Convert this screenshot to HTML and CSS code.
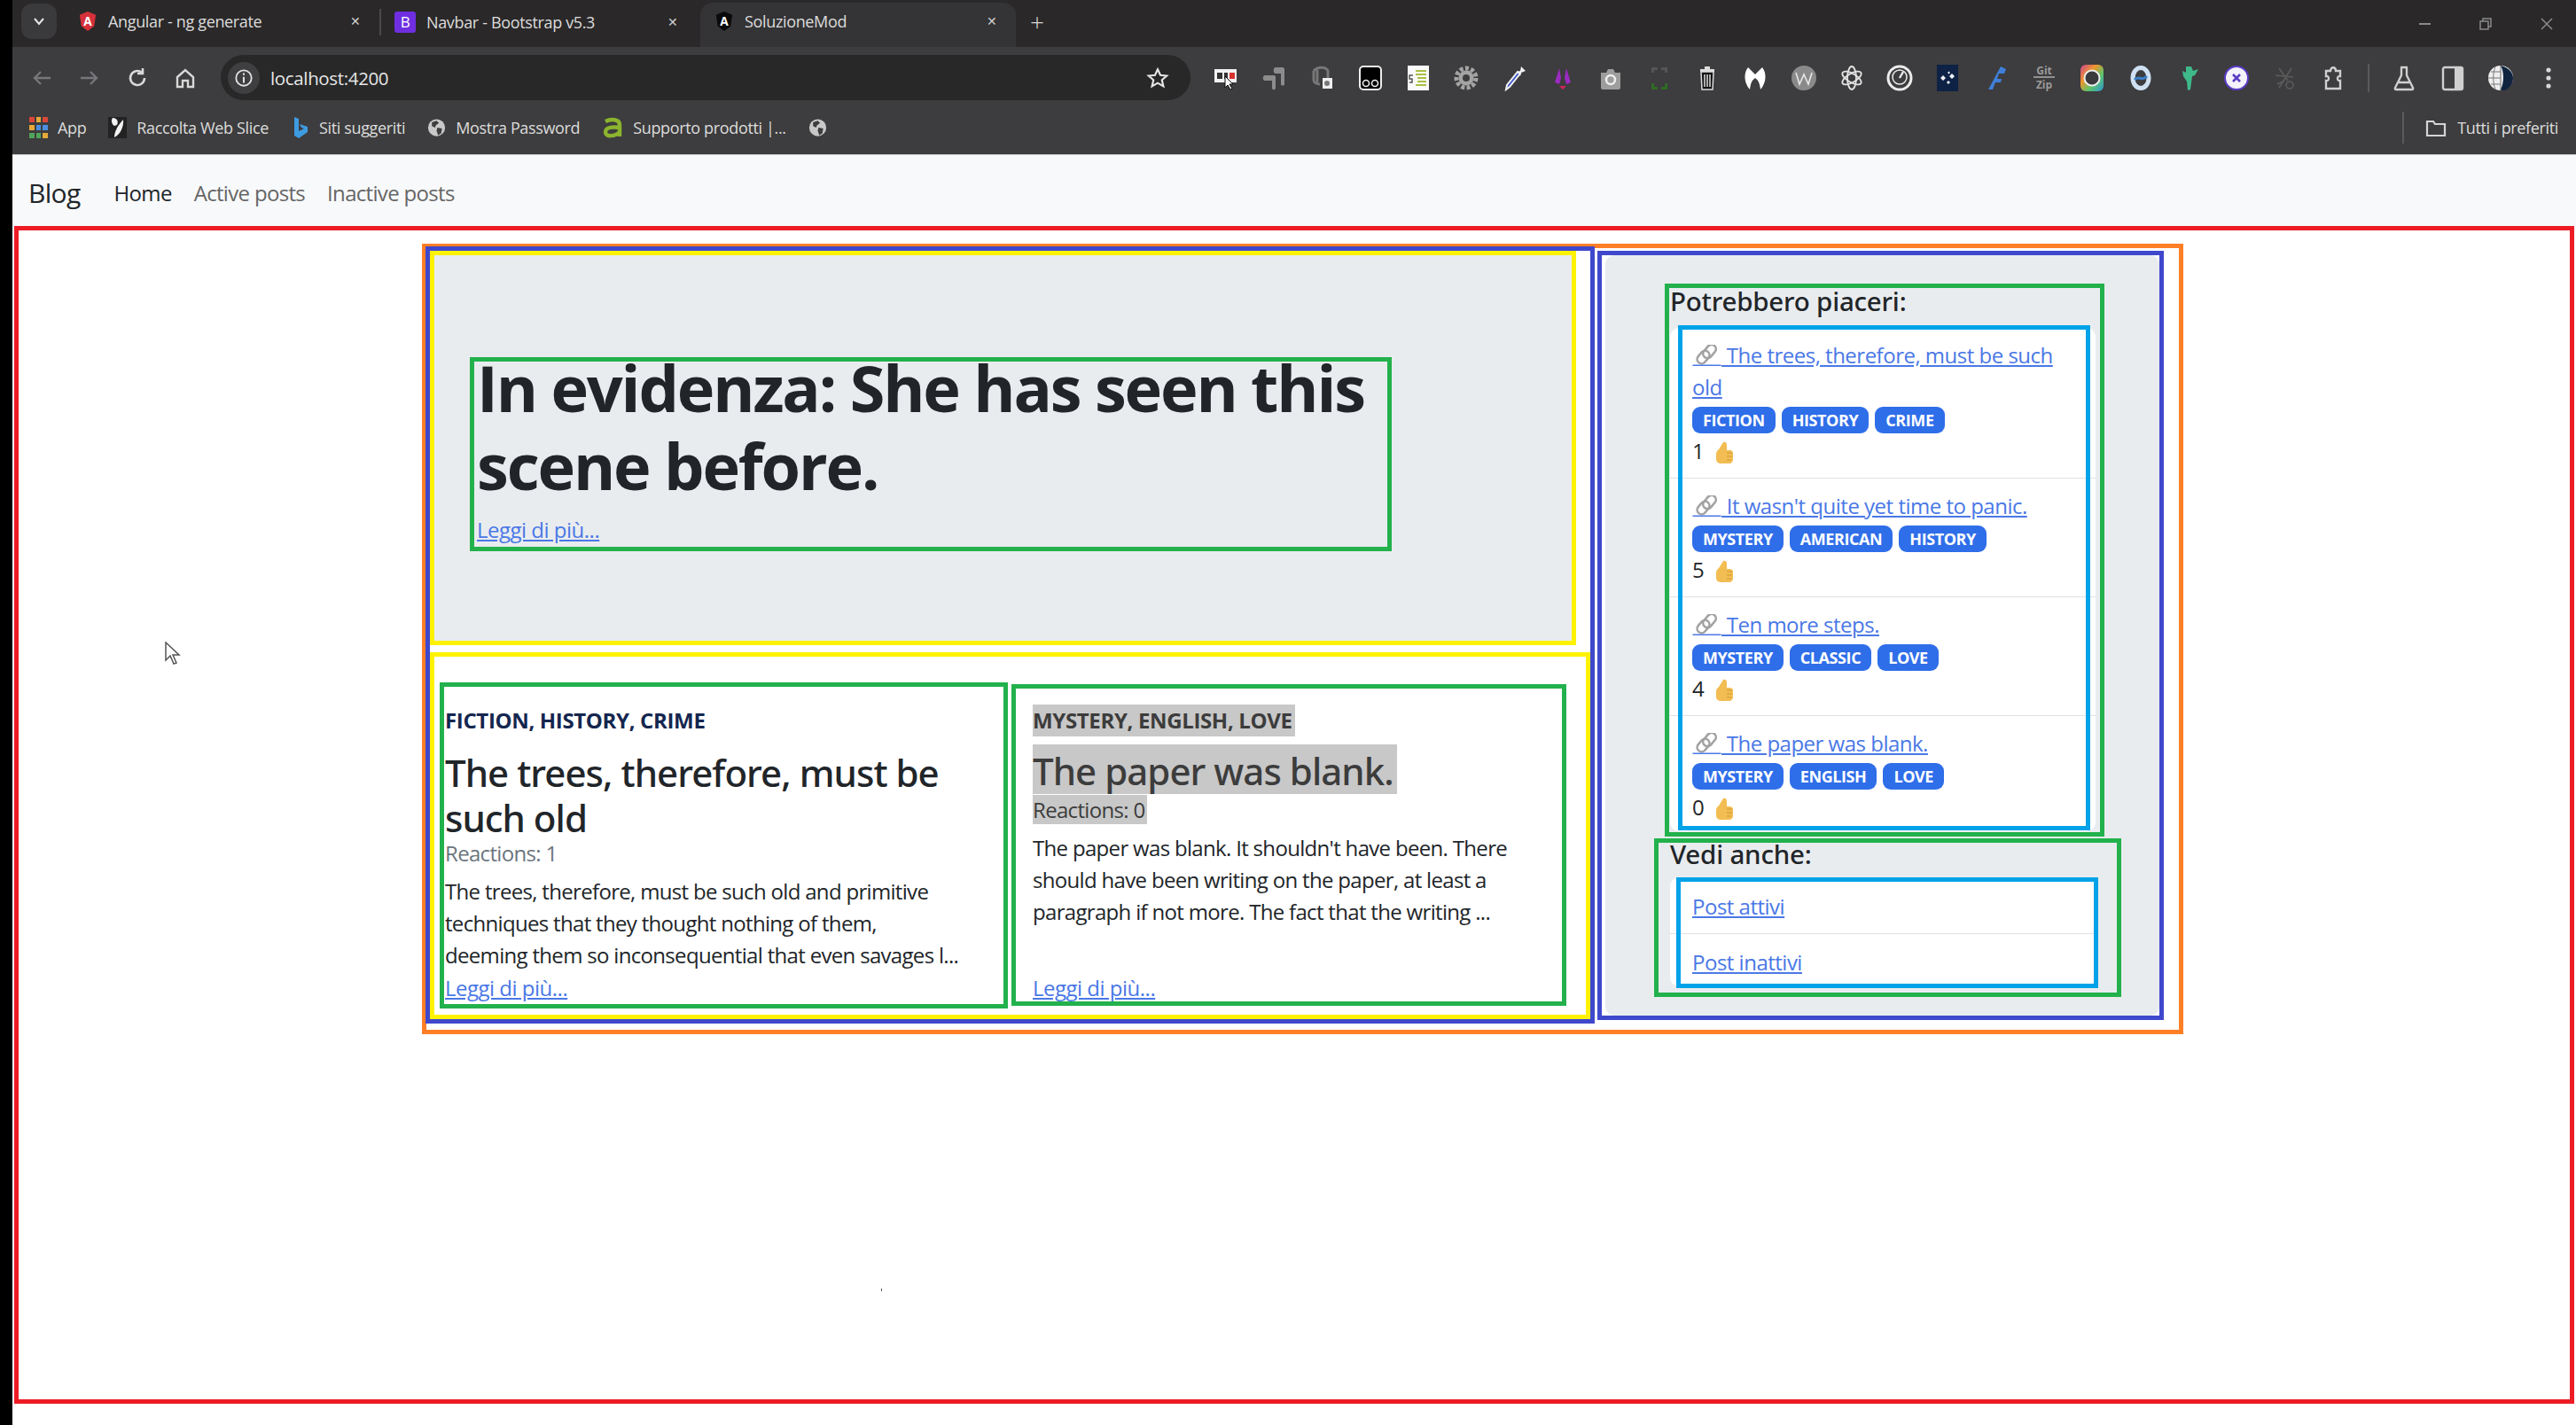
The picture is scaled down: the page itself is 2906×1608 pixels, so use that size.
FILE: index.html
```html
<!DOCTYPE html>
<html lang="it">
<head>
    <meta charset="UTF-8">
    <title>SoluzioneMod</title>
    <link rel="stylesheet" href="styles.css">
</head>
<body>
    <!-- simboli riusati nelle liste -->
    <svg class="sprite" aria-hidden="true">
        <symbol id="chain" viewBox="0 0 32 24">
            <g fill="none" stroke="#a2a2a2" stroke-width="2.6">
                <rect x="14" y="-1" width="10" height="17" rx="5" transform="rotate(40 19 7.500)"/>
                <rect x="7" y="6" width="10" height="16" rx="5" transform="rotate(40 12 14)"/>
            </g>
            <rect x="0" y="22.500" width="32" height="1.500" fill="#4a78e6"/>
        </symbol>
        <symbol id="thumb" viewBox="0 0 22 25">
            <path fill="#f2bd52" d="M10 1c2-1 4 0 4 3v6h3c2 0 4 1 4 3v8c0 2-2 4-4 4H8c-4 0-6-2-6-5v-6c0-2 1-3 3-5z"/>
            <path fill="none" stroke="#d09a35" stroke-width="1.200" d="M14 13h6M14 17h6M14 21h5"/>
        </symbol>
    </svg>

    <header class="browser">
        <div class="tabstrip">
            <div class="tab-search">
                <svg viewBox="0 0 16 16" width="16" height="16"><path d="M3 5l5 6 5-6" fill="none" stroke="#e6e6e6" stroke-width="2"/></svg>
            </div>
            <div class="tab">
                <svg class="favicon" viewBox="0 0 22 24"><path fill="#d6303a" d="M11 0l10 4-2 14-8 6-8-6L1 4z"/><text x="11" y="17" class="fav-letter">A</text></svg>
                <span class="tab-title">Angular - ng generate</span>
                <span class="tab-close">&#10005;</span>
            </div>
            <div class="tab tab-sep">
                <span class="fav-box">B</span>
                <span class="tab-title">Navbar - Bootstrap v5.3</span>
                <span class="tab-close">&#10005;</span>
            </div>
            <div class="tab tab-active">
                <svg class="favicon" viewBox="0 0 22 24"><path fill="#0a0a0a" d="M11 0l10 4-2 14-8 6-8-6L1 4z"/><text x="11" y="17" class="fav-letter">A</text></svg>
                <span class="tab-title">SoluzioneMod</span>
                <span class="tab-close">&#10005;</span>
            </div>
            <span class="tab-new">+</span>
            <div class="win-controls">
                <span class="win-min"></span>
                <svg viewBox="0 0 14 14" width="14" height="14"><path d="M1 4h9v9H1zM4 4V1h9v9h-3" fill="none" stroke="#8a8a8a" stroke-width="1.500"/></svg>
                <svg viewBox="0 0 14 14" width="14" height="14"><path d="M1 1l12 12M13 1L1 13" stroke="#8a8a8a" stroke-width="1.500"/></svg>
            </div>
        </div>

        <div class="toolbar">
            <svg class="tool" viewBox="0 0 30 30"><path d="M25 15H7M14 8l-7 7 7 7" fill="none" stroke="#77767a" stroke-width="2.400"/></svg>
            <svg class="tool" viewBox="0 0 30 30"><path d="M5 15h18M16 8l7 7-7 7" fill="none" stroke="#77767a" stroke-width="2.400"/></svg>
            <svg class="tool" viewBox="0 0 30 30"><path d="M23 15a8 8 0 1 1-3-6.200M21 4v6h-6" fill="none" stroke="#d8d8d8" stroke-width="2.600"/></svg>
            <svg class="tool" viewBox="0 0 30 30"><path d="M6 14l9-8 9 8v11h-6v-7h-6v7H6z" fill="none" stroke="#d8d8d8" stroke-width="2.400"/></svg>

            <div class="omnibox">
                <span class="site-info">
                    <svg viewBox="0 0 24 24" width="22" height="22"><circle cx="12" cy="12" r="9.500" fill="none" stroke="#e2e2e2" stroke-width="2"/><path d="M12 10.500V18M12 6v2.400" stroke="#e2e2e2" stroke-width="2.200"/></svg>
                </span>
                <span class="url">localhost:4200</span>
                <svg class="star" viewBox="0 0 24 24" width="26" height="26"><path d="M12 3l2.800 6 6.600.7-5 4.400 1.500 6.500L12 17.200 6.100 20.600l1.500-6.500-5-4.400 6.600-.7z" fill="none" stroke="#e6e6e6" stroke-width="2"/></svg>
            </div>

            <div class="extensions">
                <svg class="ext" viewBox="0 0 30 30"><rect x="2" y="5" width="25" height="15" fill="#f2f2f2"/><path d="M5 9h6v7H5zM13 9h4v7h-4z" fill="#333"/><path d="M19 9h6v7h-6z" fill="#d8322f"/><path d="M14 13l0 13 3-3 3 5 2-1-3-5h4z" fill="#fff" stroke="#111"/></svg>
                <svg class="ext" viewBox="0 0 30 30"><path d="M17 3h8c1 0 2 1 2 2v17c0 2-4 2-4 0V10h-6c-3 0-3-7 0-7zM5 12h10c2 0 2 1 2 2v12c0 3-4 3-4 0v-8H5c-3 0-3-6 0-6z" fill="#8c8c8c"/></svg>
                <svg class="ext" viewBox="0 0 30 30"><path d="M5 7c4-5 14-5 16 0v12M9 6v14M5 7v10c0 3 3 5 7 5" fill="none" stroke="#777" stroke-width="3"/><path d="M15 15h11v12H15z" fill="#eee"/><circle cx="20" cy="21" r="3" fill="#777"/></svg>
                <svg class="ext" viewBox="0 0 30 30"><rect x="3" y="2" width="24" height="26" rx="4" fill="#000" stroke="#eee" stroke-width="2"/><circle cx="10" cy="21" r="3.500" fill="none" stroke="#eee" stroke-width="1.600"/><circle cx="20" cy="21" r="3.500" fill="none" stroke="#eee" stroke-width="1.600"/></svg>
                <svg class="ext" viewBox="0 0 30 30"><rect x="3" y="1" width="24" height="28" fill="#fafafa"/><path d="M12 7h12M12 11h12M14 15h10M14 19h10M12 23h12" stroke="#a9bf45" stroke-width="2"/><path d="M9 12H5v4h3v4H5" fill="none" stroke="#555" stroke-width="1.500"/></svg>
                <svg class="ext" viewBox="0 0 30 30"><circle cx="15" cy="15" r="11" fill="none" stroke="#a4a4a4" stroke-width="5" stroke-dasharray="4 2.300"/><circle cx="15" cy="15" r="8.500" fill="#a4a4a4"/><circle cx="15" cy="15" r="4" fill="#3d3c3e"/></svg>
                <svg class="ext" viewBox="0 0 30 30"><path d="M21 10L9 25l-4 3 1-5L18 8z" fill="#3f59c9" stroke="#f1f1f1" stroke-width="2"/><path d="M17 8l4-1 1-5 5 5-5 2-1 4z" fill="#f1f1f1"/></svg>
                <svg class="ext" viewBox="0 0 30 30"><path d="M11 4L6 20l5 2 2-7zM19 4l5 16-5 2-2-7z" fill="#9a2bc0"/><path d="M11 24h8l-4 4z" fill="#d2245f"/></svg>
                <svg class="ext" viewBox="0 0 30 30"><path d="M4 9h6l2-4h6l2 4h6v17c0 1-1 2-2 2H6c-1 0-2-1-2-2z" fill="#9d9d9d"/><circle cx="15" cy="17" r="5" fill="none" stroke="#eee" stroke-width="2.500"/></svg>
                <svg class="ext" viewBox="0 0 30 30"><path d="M6 3h7v3H9v3H6zM17 3h7v6h-3V6h-4z" fill="#555"/><path d="M6 21h3v4h4v3H6zM21 21h3v7h-7v-3h4z" fill="#2f6b24"/></svg>
                <svg class="ext" viewBox="0 0 30 30"><path d="M8 8h14l-1 20H9z" fill="#111" stroke="#ddd" stroke-width="1.500"/><path d="M7 5h16v3H7zM12 2h6v3h-6z" fill="#ddd"/><path d="M12 11v14M15 11v14M18 11v14" stroke="#ddd" stroke-width="1.500"/></svg>
                <svg class="ext" viewBox="0 0 30 30"><path d="M7 3l8 8 8-8c5 6 5 17-2 25-1-7-2-10-6-13-4 3-5 6-6 13C2 20 2 9 7 3z" fill="#fff"/></svg>
                <svg class="ext" viewBox="0 0 30 30"><circle cx="15" cy="15" r="14" fill="#8a8a8a"/><path d="M6 9l4 13 5-11 5 11 4-13" fill="none" stroke="#e8e8e8" stroke-width="1.600"/></svg>
                <svg class="ext" viewBox="0 0 30 30"><g fill="none" stroke="#e4e4e4" stroke-width="1.800"><ellipse cx="15" cy="15" rx="5" ry="13"/><ellipse cx="15" cy="15" rx="5" ry="12" transform="rotate(60 15 15)"/><ellipse cx="15" cy="15" rx="5" ry="12" transform="rotate(120 15 15)"/></g></svg>
                <svg class="ext" viewBox="0 0 30 30"><circle cx="15" cy="15" r="13" fill="none" stroke="#ececec" stroke-width="3"/><circle cx="15" cy="14" r="8" fill="none" stroke="#ececec" stroke-width="1.500"/><path d="M15 15l4-7" stroke="#ececec" stroke-width="2.400"/></svg>
                <svg class="ext" viewBox="0 0 30 30"><rect x="3" y="0" width="24" height="30" fill="#0d2244"/><path d="M7 15l3-3 3 3-3 3zM17 13l3-3 3 3-3 3zM14 20l2-2 2 2-2 2zM15 9l1.500-1.500L18 9l-1.500 1.500z" fill="#eef2f8"/></svg>
                <svg class="ext" viewBox="0 0 30 30"><path d="M20 2L6 28h5l3-8h6l1-4h-5l2-6h6l2-5z" fill="#3f7fd9"/></svg>
                <svg class="ext" viewBox="0 0 30 30"><text x="15" y="11" class="ext-letters">Git</text><path d="M3 14h24" stroke="#909090" stroke-width="2"/><text x="15" y="27" class="ext-letters">Zip</text></svg>
                <svg class="ext" viewBox="0 0 30 30">
                    <defs><linearGradient id="rainbow" x1="0" y1="0" x2="1" y2="1"><stop offset="0" stop-color="#c9458f"/><stop offset=".35" stop-color="#f0962d"/><stop offset=".65" stop-color="#5cc36a"/><stop offset="1" stop-color="#2f93d8"/></linearGradient></defs>
                    <rect x="2" y="0" width="26" height="30" rx="6" fill="url(#rainbow)"/><circle cx="15" cy="15" r="8.500" fill="#3a3a3c" stroke="#eee" stroke-width="2"/>
                </svg>
                <svg class="ext" viewBox="0 0 30 30"><ellipse cx="15" cy="15" rx="9" ry="11.500" fill="none" stroke="#cfe0f2" stroke-width="5"/><path d="M8 17c5-6 8 3 14-4" fill="none" stroke="#3a7fc9" stroke-width="3"/></svg>
                <svg class="ext" viewBox="0 0 30 30"><path d="M12 2h6l2 5 6-2-4 7-3 1-2 15-3 1-1-10-4-6-1-6 4 2z" fill="#3fb98a"/></svg>
                <svg class="ext" viewBox="0 0 30 30"><circle cx="15" cy="15" r="13" fill="#f4f2fb" stroke="#5a3cc4" stroke-width="2"/><path d="M11 11l8 8M19 11l-8 8" stroke="#5a3cc4" stroke-width="2.600"/></svg>
                <svg class="ext" viewBox="0 0 30 30"><path d="M8 4l10 14M22 4L8 26M4 12l20 2M6 22l8-4" fill="none" stroke="#5c5c5c" stroke-width="1.600"/><circle cx="20" cy="23" r="4" fill="none" stroke="#5c5c5c" stroke-width="1.600"/></svg>
                <svg class="ext" viewBox="0 0 30 30"><path d="M7 7h5c0-5 6-5 6 0h5v6c-4-1-4 6 0 5v9H7v-9c4 1 4-6 0-5z" fill="none" stroke="#cfcfcf" stroke-width="2.400"/></svg>
                <span class="tool-sep"></span>
                <svg class="ext" viewBox="0 0 30 30"><path d="M11 3h8M12 3v9L5 26c-.5 1 0 2 1 2h18c1 0 1.500-1 1-2l-7-14V3M9 20h12" fill="none" stroke="#cfcfcf" stroke-width="2.400"/></svg>
                <svg class="ext" viewBox="0 0 30 30"><rect x="4" y="3" width="22" height="25" rx="2" fill="none" stroke="#cfcfcf" stroke-width="2.400"/><rect x="17" y="4" width="8" height="23" fill="#cfcfcf"/></svg>
                <svg class="ext" viewBox="0 0 30 30"><circle cx="15" cy="15" r="14" fill="#eee"/><path d="M1 15h14M15 1v28M4 8h11M4 22h11M9 2c-3 8-3 18 0 26" fill="none" stroke="#777" stroke-width="1"/><path d="M15 1c9 2 14 8 14 14 0 6-3 11-9 14-3 0-5 0-5-1 4-8 4-20 0-27z" fill="#11243f"/></svg>
                <svg class="ext" viewBox="0 0 30 30"><circle cx="15" cy="6" r="2.600" fill="#d8d8d8"/><circle cx="15" cy="15" r="2.600" fill="#d8d8d8"/><circle cx="15" cy="24" r="2.600" fill="#d8d8d8"/></svg>
            </div>
        </div>

        <div class="bookmarks">
            <span class="bm">
                <svg class="bm-icon" viewBox="0 0 21 24">
                    <path fill="#d9473b" d="M0 0h6v6H0zM15 0h6v6h-6z"/><path fill="#e6a93a" d="M8 0h5v6H8zM0 9h6v6H0z"/><path fill="#4c8fe0" d="M8 9h5v6H8zM15 9h6v6h-6z"/><path fill="#4fa65a" d="M0 18h6v6H0zM8 18h5v6H8z"/><path fill="#e6a93a" d="M15 18h6v6h-6z"/>
                </svg>App
            </span>
            <span class="bm">
                <svg class="bm-icon" viewBox="0 0 21 24"><path fill="#222" d="M0 0h21v24H0z"/><path fill="#f2f2f2" d="M5 1c5 0 7 4 5 8l-3 1C4 8 3 4 5 1zM17 3c1 7-3 17-10 20 0-5 3-13 10-20z"/></svg>Raccolta Web Slice
            </span>
            <span class="bm">
                <svg class="bm-icon" viewBox="0 0 21 24"><path fill="#3e9be0" d="M4 0l5 2v14l6-3-3-1-2-4 9 3v6L9 24l-5-3z"/></svg>Siti suggeriti
            </span>
            <span class="bm">
                <svg class="bm-icon" viewBox="0 0 24 24"><circle cx="12" cy="12" r="11" fill="#c8c8c8"/><path fill="#3d3c3e" d="M6 5l6-2 3 3-4 3-1 3-4-2zM13 12l6 1-1 6-4 3-2-6z"/></svg>Mostra Password
            </span>
            <span class="bm">
                <svg class="bm-icon bm-wide" viewBox="0 0 24 24"><path fill="none" stroke="#8cb42e" stroke-width="4.500" d="M4 5c6-3 16-3 16 4v13M20 12c-6-1-16-1-16 5s11 5 16 0"/></svg>Supporto prodotti |...
            </span>
            <span class="bm">
                <svg class="bm-icon" viewBox="0 0 24 24"><circle cx="12" cy="12" r="11" fill="#c8c8c8"/><path fill="#3d3c3e" d="M6 5l6-2 3 3-4 3-1 3-4-2zM13 12l6 1-1 6-4 3-2-6z"/></svg>
            </span>
            <span class="bm bm-all">
                <svg viewBox="0 0 24 24" width="24" height="24"><path d="M2 5h7l2 3h11v13H2z" fill="none" stroke="#d4d4d4" stroke-width="2.200"/></svg>Tutti i preferiti
            </span>
        </div>
    </header>

    <nav class="navbar">
        <a class="brand">Blog</a>
        <a class="nav-link current">Home</a>
        <a class="nav-link">Active posts</a>
        <a class="nav-link">Inactive posts</a>
    </nav>

    <main class="frame-red">
        <div class="frame-orange">
            <section class="col-left">
                <div class="hero">
                    <div class="hero-inner">
                        <h1>In evidenza: She has seen this scene before.</h1>
                        <a class="post-link">Leggi di più...</a>
                    </div>
                </div>
                <div class="cards">
                    <article class="card card-first">
                        <strong class="category cat-blue">FICTION, HISTORY, CRIME</strong>
                        <h3 class="card-title">The trees, therefore, must be such old</h3>
                        <div class="reactions">Reactions: 1</div>
                        <p class="excerpt">The trees, therefore, must be such old and primitive<br>techniques that they thought nothing of them,<br>deeming them so inconsequential that even savages l...</p>
                        <a class="post-link">Leggi di più...</a>
                    </article>
                    <article class="card card-second">
                        <strong class="category picked">MYSTERY, ENGLISH, LOVE</strong>
                        <h3 class="card-title"><span class="picked title-picked">The paper was blank.</span></h3>
                        <div class="reactions reactions-tight"><span class="picked">Reactions: 0</span></div>
                        <p class="excerpt">The paper was blank. It shouldn't have been. There should have been writing on the paper, at least a paragraph if not more. The fact that the writing ...</p>
                        <a class="post-link">Leggi di più...</a>
                    </article>
                </div>
            </section>

            <aside class="col-right">
                <div class="side-panel">
                    <div class="side-box">
                        <h4 class="side-title">Potrebbero piaceri:</h4>
                        <ul class="list-card">
                            <li class="list-item">
                                <a class="post-link"><svg class="chain"><use href="#chain"/></svg> The trees, therefore, must be such old</a>
                                <div class="badges"><span class="badge">FICTION</span><span class="badge">HISTORY</span><span class="badge">CRIME</span></div>
                                <div class="likes">1 <svg class="thumb"><use href="#thumb"/></svg></div>
                            </li>
                            <li class="list-item">
                                <a class="post-link"><svg class="chain"><use href="#chain"/></svg> It wasn't quite yet time to panic.</a>
                                <div class="badges"><span class="badge">MYSTERY</span><span class="badge">AMERICAN</span><span class="badge">HISTORY</span></div>
                                <div class="likes">5 <svg class="thumb"><use href="#thumb"/></svg></div>
                            </li>
                            <li class="list-item">
                                <a class="post-link"><svg class="chain"><use href="#chain"/></svg> Ten more steps.</a>
                                <div class="badges"><span class="badge">MYSTERY</span><span class="badge">CLASSIC</span><span class="badge">LOVE</span></div>
                                <div class="likes">4 <svg class="thumb"><use href="#thumb"/></svg></div>
                            </li>
                            <li class="list-item">
                                <a class="post-link"><svg class="chain"><use href="#chain"/></svg> The paper was blank.</a>
                                <div class="badges"><span class="badge">MYSTERY</span><span class="badge">ENGLISH</span><span class="badge">LOVE</span></div>
                                <div class="likes">0 <svg class="thumb"><use href="#thumb"/></svg></div>
                            </li>
                            <li class="mark-cyan mark-cyan-list"></li>
                        </ul>
                    </div>
                    <div class="side-box side-box-also">
                        <h4 class="side-title">Vedi anche:</h4>
                        <ul class="list-card">
                            <li class="list-item list-item-plain"><a class="post-link">Post attivi</a></li>
                            <li class="list-item list-item-plain"><a class="post-link">Post inattivi</a></li>
                            <li class="mark-cyan mark-cyan-also"></li>
                        </ul>
                    </div>
                </div>
            </aside>
        </div>
    </main>

    <!-- puntatore del mouse nel fotogramma -->
    <svg class="mouse" viewBox="0 0 20 26"><path d="M2 1v20l5-5 4 9 3-1-4-9h7z" fill="#fff" stroke="#555" stroke-width="1.500"/></svg>
    <span class="speck"></span>
</body>
</html>
```

FILE: styles.css
```css
* {
    box-sizing: border-box;
}
html, body {
    margin: 0;
    padding: 0;
}
body {
    position: relative;
    width: 2906px;
    height: 1608px;
    overflow: hidden;
    border-left: 14px solid #000;
    background: #fff;
    font-family: "Open Sans", "Noto Sans", sans-serif;
    font-size: 24px;
    line-height: 36px;
    letter-spacing: -0.68px;
    color: #212529;
}
.sprite {
    display: none;
}

/* barra del browser */
.browser {
    color: #dcdcdc;
    font-size: 18px;
    letter-spacing: -0.35px;
    line-height: 24px;
}
.tabstrip {
    display: flex;
    align-items: center;
    height: 53px;
    background: #2a2829;
}
.tab-search {
    display: flex;
    align-items: center;
    justify-content: center;
    width: 40px;
    height: 40px;
    margin: -6px 8px 0 10px;
    border-radius: 12px;
    background: #3a393b;
}
.tab {
    display: flex;
    align-items: center;
    width: 356px;
    height: 50px;
    margin-top: 3px;
    padding: 0 21px 8px 17px;
    flex-shrink: 0;
}
.tab-sep {
    width: 362px;
    height: 30px;
    margin-top: -3px;
    padding: 0 25px 0 15px;
    border-left: 2px solid #4a494b;
}
.tab-active {
    background: #343335;
    border-radius: 14px 14px 0 0;
}
.favicon {
    width: 20px;
    height: 24px;
    margin-right: 13px;
}
.fav-letter {
    font-size: 15px;
    font-weight: 700;
    fill: #fff;
    text-anchor: middle;
    letter-spacing: 0;
}
.fav-box {
    width: 24px;
    height: 24px;
    margin-right: 12px;
    border-radius: 3px;
    background: #6f2fe0;
    color: #fff;
    font-size: 17px;
    text-align: center;
}
.tab-title {
    flex: 1;
    white-space: nowrap;
}
.tab-close {
    font-size: 14px;
    color: #cfcfcf;
}
.tab-new {
    margin: -6px 0 0 16px;
    font-size: 28px;
    font-weight: 300;
    line-height: 38px;
    color: #d8d8d8;
}
.win-controls {
    display: flex;
    align-items: center;
    gap: 55px;
    margin-left: auto;
    padding-right: 26px;
}
.win-min {
    width: 13px;
    height: 2px;
    background: #8a8a8a;
}

.toolbar {
    display: flex;
    align-items: center;
    height: 62px;
    padding: 7px 0 0 18px;
    gap: 24px;
    background: #3d3c3e;
}
.tool {
    width: 30px;
    height: 30px;
    flex-shrink: 0;
}
.omnibox {
    display: flex;
    align-items: center;
    width: 1094px;
    height: 51px;
    margin-left: 1px;
    padding: 0 24px 0 8px;
    border-radius: 26px;
    background: #282828;
    font-size: 20.5px;
    color: #e6e6e6;
}
.site-info {
    display: flex;
    align-items: center;
    justify-content: center;
    width: 36px;
    height: 36px;
    margin-right: 12px;
    border-radius: 50%;
    background: #3f3e40;
}
.url {
    flex: 1;
}
.extensions {
    display: flex;
    align-items: center;
    gap: 24.3px;
    margin-left: 1px;
}
.ext {
    width: 30px;
    height: 30px;
    flex-shrink: 0;
}
.ext-letters {
    font-size: 12px;
    font-weight: 700;
    fill: #9a9a9a;
    text-anchor: middle;
    letter-spacing: 0;
}
.tool-sep {
    width: 2px;
    height: 32px;
    background: #5a595b;
}

.bookmarks {
    display: flex;
    align-items: center;
    gap: 25px;
    height: 60px;
    padding: 0 20px 2px 19px;
    background: #3d3c3e;
    border-bottom: 1px solid #c9c9c9;
}
.bm {
    display: flex;
    align-items: center;
    white-space: nowrap;
}
.bm-icon {
    width: 21px;
    height: 24px;
    margin-right: 11px;
}
.bm-wide {
    width: 24px;
}
.bm-all {
    margin-left: auto;
    padding-left: 24px;
    border-left: 2px solid #5a595b;
    height: 36px;
    gap: 12px;
}

/* navbar di bootstrap */
.navbar {
    display: flex;
    align-items: center;
    height: 80px;
    padding: 6px 0 0 18px;
    background: #f8f9fa;
}
.brand {
    margin-right: 38px;
    font-size: 30px;
    color: #212529;
}
.nav-link {
    margin-right: 25px;
    color: #666;
}
.nav-link.current {
    color: #212529;
}

/* riquadri disegnati sopra la pagina */
.frame-red {
    width: 2888px;
    height: 1329px;
    margin-left: 2px;
    padding: 15px 0 0 455px;
    border: 5px solid #ed1c24;
}
.frame-orange {
    display: flex;
    align-items: flex-start;
    gap: 3px;
    width: 1987px;
    height: 892px;
    border: 5px solid #ff7f27;
}
.col-left {
    width: 1319px;
    height: 877px;
    margin: -2px 0 0 -1px;
    border: 5px solid #3f48cc;
}
.hero {
    width: 1293px;
    height: 445px;
    padding: 115px 0 0 40px;
    border: 5px solid #fff200;
    background: #e9ecef;
}
.hero-inner {
    display: flex;
    flex-direction: column;
    align-items: flex-start;
    width: 1040px;
    height: 219px;
    padding-left: 3px;
    border: 5px solid #22b14c;
}
.hero-inner h1 {
    margin: -15px 0 11px;
    font-size: 72px;
    font-weight: 700;
    line-height: 88px;
    letter-spacing: -2.15px;
}
.post-link {
    color: #4a78e6;
    letter-spacing: -0.5px;
    text-decoration: underline;
}
.cards {
    display: flex;
    align-items: flex-start;
    gap: 4px;
    width: 1309px;
    height: 414px;
    margin-top: 8px;
    padding: 29px 0 0 6px;
    border: 5px solid #fff200;
}
.card {
    display: flex;
    flex-direction: column;
    align-items: flex-start;
    padding-left: 1px;
    border: 5px solid #22b14c;
}
.card-first {
    width: 641px;
    height: 368px;
    padding-top: 20px;
}
.card-second {
    width: 626px;
    height: 363px;
    margin-top: 2px;
    padding-left: 19px;
    padding-top: 18px;
}
.category {
    font-weight: 700;
    font-size: 24px;
    letter-spacing: -0.35px;
}
.cat-blue {
    color: #14264f;
}
.card-title {
    margin: 15px 0 0;
    font-family: "Noto Sans", sans-serif;
    font-size: 42px;
    font-weight: 500;
    line-height: 51px;
    letter-spacing: -0.95px;
}
.card-second .card-title {
    margin-top: 9px;
}
.picked {
    padding-right: 3px;
    background: #c8c8c8;
    color: #3c3c3c;
}
.title-picked {
    display: inline-block;
    padding: 4px 4px 0 0;
    line-height: 52px;
}
.reactions {
    margin-top: -3px;
    color: #6c757d;
}
.reactions-tight {
    margin-top: 0;
}
.excerpt {
    margin: 7px 0 0;
}
.card .post-link {
    margin-top: auto;
}
.card-second .post-link {
    margin-bottom: -3px;
}

/* colonna destra */
.col-right {
    width: 639px;
    height: 868px;
    margin-top: 3px;
    border: 5px solid #3f48cc;
}
.side-panel {
    height: 100%;
    margin-left: 4px;
    padding: 32px 0 0 67px;
    border-radius: 10px;
    background: #e9ecef;
}
.side-box {
    width: 496px;
    padding: 0 0 1px 1px;
    border: 5px solid #22b14c;
}
.side-box-also {
    width: 527px;
    margin: 2px 0 0 -12px;
    padding: 0 0 7px 13px;
}
.side-title {
    margin: -3px 0 13px;
    font-family: "Noto Sans", sans-serif;
    font-size: 29.5px;
    font-weight: 500;
    line-height: 35px;
    letter-spacing: -0.2px;
}
.side-box-also .side-title {
    margin: -5px 0 9px;
}
.list-card {
    position: relative;
    width: 480px;
    margin: 0;
    padding: 0;
    list-style: none;
    border-radius: 10px;
    background: #fff;
}
.list-item {
    padding: 13px 24px 12px 25px;
    border-bottom: 1px solid #dfe1e4;
}
.list-item:nth-last-child(2) {
    padding-bottom: 9px;
    border-bottom: 0;
}
.list-item-plain {
    padding: 14px 24px 13px 25px;
}
.list-item-plain:first-child {
    padding: 15px 24px 12px 25px;
}
.chain {
    width: 33px;
    height: 24px;
    vertical-align: -3px;
}
.badges {
    display: flex;
    align-items: center;
    gap: 7px;
    height: 36px;
    padding-top: 2px;
}
.badge {
    height: 30px;
    padding: 0 12px;
    border-radius: 9px;
    background: #2f6ee9;
    color: #fff;
    font-size: 18px;
    font-weight: 700;
    line-height: 30px;
    letter-spacing: -0.42px;
}
.likes {
    height: 36px;
}
.thumb {
    width: 22px;
    height: 25px;
    margin-left: 6px;
    vertical-align: -5px;
}
.mark-cyan {
    position: absolute;
    border: 5px solid #00a2e8;
    pointer-events: none;
}
.mark-cyan-list {
    top: -3px;
    left: 9px;
    right: 6px;
    bottom: 1px;
}
.mark-cyan-also {
    top: 0;
    left: 7px;
    right: -3px;
    bottom: -2px;
}

.mouse {
    position: absolute;
    left: 171px;
    top: 724px;
    width: 20px;
    height: 26px;
}
.speck {
    position: absolute;
    left: 980px;
    top: 1454px;
    width: 1px;
    height: 3px;
    background: #555;
}
```
